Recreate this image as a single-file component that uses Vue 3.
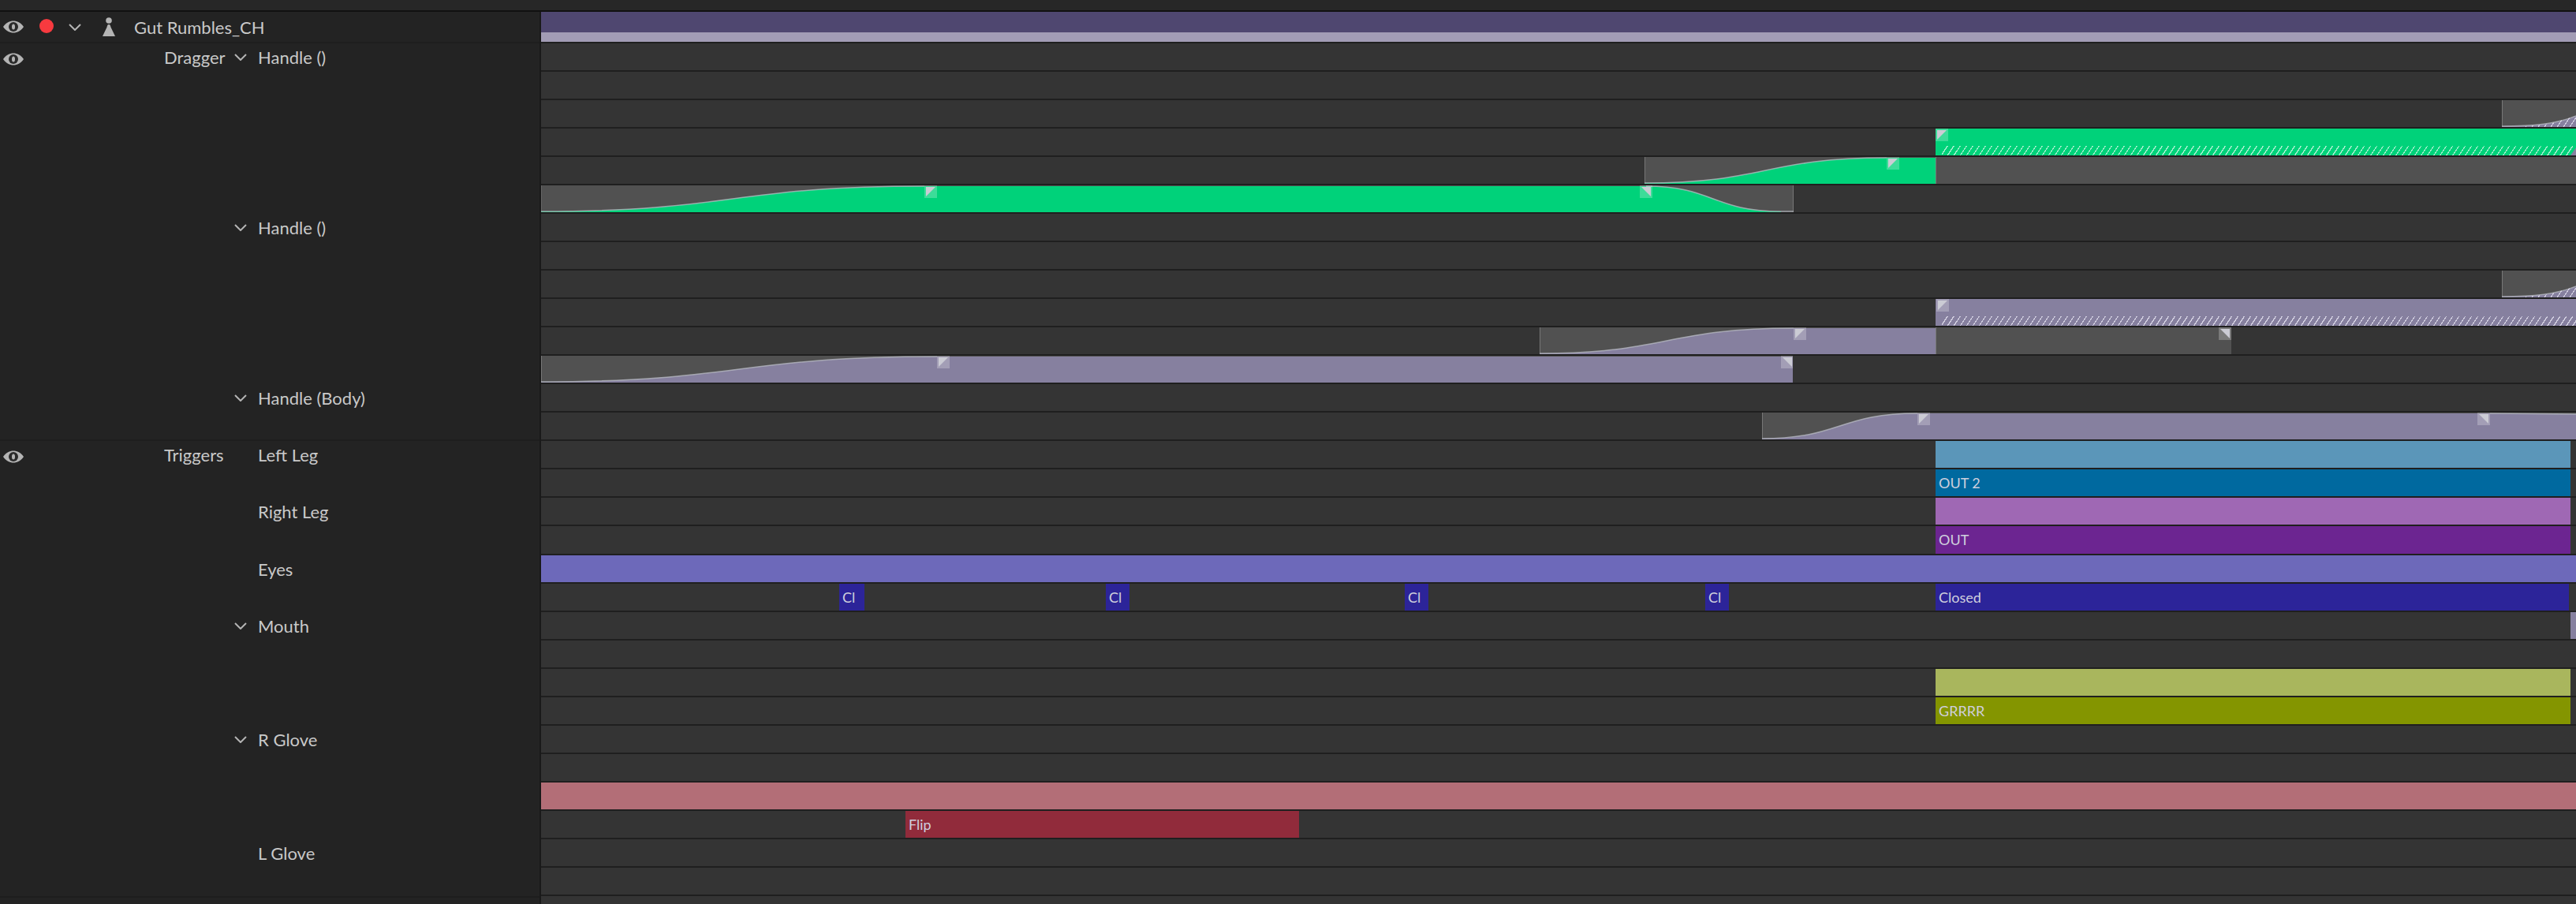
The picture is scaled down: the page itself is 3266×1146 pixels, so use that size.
<template>
  <div class="page">
    <div class="top-strip"></div>
    <div class="main">
      <aside class="side">
        <div class="layer-row">
          <svg class="eye" viewBox="0 0 26 16"><path d="M0 8C4 2.500 8 .5 13 .5S22 2.500 26 8C22 13.500 18 15.500 13 15.500S4 13.500 0 8Z" /><circle class="eye-ring" cx="13" cy="8" r="6" /><ellipse cx="13" cy="8" rx="2" ry="3.500" /></svg>
          <span class="dot"></span>
          <svg class="chev chev-top" viewBox="0 0 16 9"><path d="M1 1l7 7 7-7" /></svg>
          <svg class="person" viewBox="0 0 16 24"><circle cx="8" cy="4" r="3.800" /><path d="M8 9C6 9 6 11 5.500 12.500L0 24H16L10.500 12.500C10 11 10 9 8 9Z" /></svg>
          <span class="layer-name">Gut Rumbles_CH</span>
        </div>
        <div v-for="group in groups" :key="group.name" class="group">
          <div class="group-head">
            <svg class="eye" viewBox="0 0 26 16"><path d="M0 8C4 2.500 8 .5 13 .5S22 2.500 26 8C22 13.500 18 15.500 13 15.500S4 13.500 0 8Z" /><circle class="eye-ring" cx="13" cy="8" r="6" /><ellipse cx="13" cy="8" rx="2" ry="3.500" /></svg>
            <span class="group-name">{{ group.name }}</span>
          </div>
          <div class="group-items">
            <div v-for="item in group.items" :key="item.name" class="item" :style="{ height: item.rows * 36 + (item.extra || 0) + 'px' }">
              <span class="chev-slot">
                <svg v-if="item.open" class="chev" viewBox="0 0 16 9"><path d="M1 1l7 7 7-7" /></svg>
              </span>
              <span>{{ item.name }}</span>
            </div>
          </div>
        </div>
      </aside>

      <div class="tracks">
        <div v-for="(clips, i) in rows" :key="i" class="track" :class="{ first: i === 0, wide: i === 18 }">
          <div
            v-for="clip in clips"
            :key="clip.x"
            class="clip"
            :class="clip.cls"
            :style="{ left: clip.x - 686 + 'px', width: clip.w + 'px' }"
          >
            <svg v-if="clip.fill" class="curve" :viewBox="`0 0 ${clip.w} 34`" preserveAspectRatio="none">
              <path class="curve-fill" :d="clip.fill" />
              <path class="curve-line" :d="clip.line || clip.fill" />
            </svg>
            <div v-if="clip.hatch" class="hatch" :class="clip.hatch"></div>
            <span v-if="clip.label" class="clip-label">{{ clip.label }}</span>
            <i
              v-for="key in clip.keys"
              :key="key.x"
              class="keyframe"
              :class="key.dir"
              :style="{ left: key.x - clip.x + 'px' }"
            ></i>
            <div v-if="clip.tail" class="tail"></div>
          </div>
        </div>
      </div>
    </div>
  </div>
</template>

<script setup>
const groups = [
  {
    name: 'Dragger',
    items: [
      { name: 'Handle ()', rows: 6, open: true },
      { name: 'Handle ()', rows: 6, open: true },
      { name: 'Handle (Body)', rows: 2, open: true },
    ],
  },
  {
    name: 'Triggers',
    items: [
      { name: 'Left Leg', rows: 2 },
      { name: 'Right Leg', rows: 2, extra: 1 },
      { name: 'Eyes', rows: 2 },
      { name: 'Mouth', rows: 4, open: true },
      { name: 'R Glove', rows: 4, open: true },
      { name: 'L Glove', rows: 2 },
    ],
  },
]

const END = 3266
const CUT = 2454

// ease up from the bottom of the clip to the top, ending at local x = b
function rise(b) {
  return `M0 33C${b / 2} 33 ${b / 2} 1 ${b} 1`
}

function riseFill(b, w) {
  return `${rise(b)}L${w} 1L${w} 34L0 34Z`
}

const ramp = {
  x: 3172,
  w: 94,
  cls: 'gray lilac-fill',
  fill: 'M0 33C40 33 70 30 94 20L94 34L0 34Z',
  line: 'M0 33C40 33 70 30 94 20',
  hatch: 'hatch-ramp',
}

const rows = [
  [{ x: 686, w: END - 686, cls: 'summary' }],
  [],
  [],
  [ramp],
  [{ x: CUT, w: END - CUT, cls: 'green', hatch: 'hatch-green', keys: [{ x: 2454, dir: 'in' }], tail: true }],
  [
    { x: 2085, w: 369, cls: 'gray green-fill', fill: riseFill(307, 369), line: rise(307), keys: [{ x: 2392, dir: 'in' }] },
    { x: CUT, w: END - CUT, cls: 'gray' },
  ],
  [
    {
      x: 686,
      w: 1588,
      cls: 'gray green-fill edged',
      fill: `${rise(486)}L1401 1C1486 1 1486 33 1572 33L1572 34L0 34Z`,
      line: `${rise(486)}M1401 1C1486 1 1486 33 1572 33L1588 33`,
      keys: [{ x: 1172, dir: 'in' }, { x: 2079, dir: 'out' }],
    },
  ],
  [],
  [],
  [ramp],
  [{ x: CUT, w: END - CUT, cls: 'lilac', hatch: 'hatch-lilac', keys: [{ x: 2455, dir: 'in' }] }],
  [
    { x: 1952, w: 502, cls: 'gray lilac-fill', fill: riseFill(322, 502), line: rise(322), keys: [{ x: 2274, dir: 'in' }] },
    { x: CUT, w: 375, cls: 'gray', keys: [{ x: 2813, dir: 'out' }] },
  ],
  [
    { x: 686, w: 1587, cls: 'gray lilac-fill', fill: riseFill(502, 1587), line: rise(502), keys: [{ x: 1188, dir: 'in' }, { x: 2258, dir: 'out' }] },
  ],
  [],
  [
    {
      x: 2234,
      w: END - 2234,
      cls: 'gray lilac-fill',
      fill: `${rise(197)}L923 1L1032 2L1032 34L0 34Z`,
      line: `${rise(197)}M923 1L1032 2`,
      keys: [{ x: 2431, dir: 'in' }, { x: 3141, dir: 'out' }],
    },
  ],
  [{ x: CUT, w: 805, cls: 'blue-light' }],
  [{ x: CUT, w: 805, cls: 'blue', label: 'OUT 2' }],
  [{ x: CUT, w: 805, cls: 'purple-light' }],
  [{ x: CUT, w: 805, cls: 'purple', label: 'OUT' }],
  [{ x: 686, w: END - 686, cls: 'indigo-light' }],
  [
    { x: 1064, w: 32, cls: 'indigo', label: 'Cl' },
    { x: 1402, w: 30, cls: 'indigo', label: 'Cl' },
    { x: 1781, w: 30, cls: 'indigo', label: 'Cl' },
    { x: 2162, w: 30, cls: 'indigo', label: 'Cl' },
    { x: CUT, w: 803, cls: 'indigo', label: 'Closed' },
  ],
  [{ x: 3259, w: 7, cls: 'lilac' }],
  [],
  [{ x: CUT, w: 805, cls: 'olive-light' }],
  [{ x: CUT, w: 805, cls: 'olive', label: 'GRRRR' }],
  [],
  [],
  [{ x: 686, w: END - 686, cls: 'rose-light' }],
  [{ x: 1148, w: 499, cls: 'rose', label: 'Flip' }],
  [],
  [],
  [],
]
</script>

<style scoped>
.page {
  width: 3266px;
  height: 1146px;
  overflow: hidden;
  display: flex;
  flex-direction: column;
  background: #232323;
  font-family: Lato, "Open Sans", sans-serif;
  color: #c9c9c9;
  font-size: 22px;
}

.top-strip {
  height: 13px;
  flex: none;
  background: #272727;
  border-bottom: 2px solid #111;
}

.main {
  flex: 1;
  display: flex;
  min-height: 0;
}

.side {
  width: 684px;
  flex: none;
  background: #232323;
  border-right: 2px solid #1a1a1a;
}

.layer-row {
  height: 38px;
  display: flex;
  align-items: center;
  border-bottom: 2px solid #1e1e1e;
  padding-left: 4px;
}

.eye {
  width: 26px;
  height: 16px;
  flex: none;
  fill: #b4b4b4;
}

.eye-ring {
  fill: #2a2a2a;
}

.dot {
  width: 18px;
  height: 18px;
  border-radius: 50%;
  background: #f73a3f;
  margin-left: 20px;
  margin-bottom: 2px;
}

.chev {
  width: 16px;
  height: 9px;
  fill: none;
  stroke: #b4b4b4;
  stroke-width: 2;
}

.chev-top {
  margin-left: 19px;
}

.person {
  width: 16px;
  height: 24px;
  margin-left: 27px;
  fill: #b4b4b4;
}

.layer-name {
  margin-left: 24px;
}

.group {
  display: flex;
  height: 504px;
}

.group + .group {
  height: 577px;
  border-top: 2px solid #1e1e1e;
  border-bottom: 2px solid #1e1e1e;
  margin-top: -2px;
}

.group-head {
  width: 296px;
  flex: none;
  height: 34px;
  display: flex;
  align-items: center;
  padding-left: 4px;
  box-sizing: border-box;
}

.group-head .eye {
  margin-top: 6px;
}

.group-name {
  margin-left: 178px;
  padding-top: 1px;
}

.group-items {
  flex: 1;
}

.item {
  display: flex;
  align-items: flex-start;
  line-height: 36px;
}

.chev-slot {
  width: 31px;
  flex: none;
  height: 34px;
  display: flex;
  align-items: center;
}

.chev-slot .chev {
  margin-left: 1px;
}

.tracks {
  flex: 1;
  min-width: 0;
}

.track {
  position: relative;
  height: 34px;
  background: #343434;
  border-bottom: 2px solid #1f1f1f;
  overflow: hidden;
}

.track.first {
  height: 38px;
}

.track.wide {
  height: 35px;
}

.clip {
  position: absolute;
  top: 0;
  bottom: 0;
  overflow: hidden;
}

.clip-label {
  display: block;
  padding-left: 4px;
  font-size: 18px;
  line-height: 34px;
  color: #cfcfdd;
  white-space: nowrap;
}

.curve {
  position: absolute;
  inset: 0;
  width: 100%;
  height: 100%;
}

.curve-fill {
  fill: currentColor;
  stroke: none;
}

.curve-line {
  fill: none;
  stroke: #b9bcc4;
  stroke-width: 1.500;
  opacity: 0.75;
}

.summary {
  background: linear-gradient(#4f4770 0 26px, #a29cb5 26px);
}

.gray {
  background: #515151;
  box-shadow: inset 1px 0 #777;
}

.edged {
  box-shadow: inset 1px 0 #666, inset -1px 0 #777;
}

.green-fill {
  color: #00d27a;
}

.lilac-fill {
  color: #86809f;
}

.green {
  background: #00d27a;
}

.lilac {
  background: #86809f;
}

.blue-light {
  background: #5b96b9;
}

.blue {
  background: #00699f;
}

.purple-light {
  background: #9f68b4;
}

.purple {
  background: #6c2591;
}

.indigo-light {
  background: #6d69ba;
}

.indigo {
  background: #2c2499;
}

.olive-light {
  background: #a9b65d;
}

.olive {
  background: #849500;
}

.rose-light {
  background: #b36e77;
}

.rose {
  background: #912b3b;
}

.hatch {
  position: absolute;
  left: 8px;
  right: 0;
  bottom: 0;
  height: 12px;
}

.hatch-green {
  background: repeating-linear-gradient(123.700deg, transparent 0 5.400px, #a8f0d2 5.400px 6.660px);
}

.hatch-lilac {
  background: repeating-linear-gradient(123.700deg, transparent 0 5.400px, #d4d1e2 5.400px 6.660px);
}

.hatch-ramp {
  left: 0;
  height: 14px;
  background: repeating-linear-gradient(123.700deg, transparent 0 5.400px, #d4d1e2 5.400px 6.660px);
  clip-path: polygon(30px 13px, 60px 10px, 94px 0, 94px 14px, 30px 14px);
}

.keyframe {
  position: absolute;
  top: 0;
  width: 16px;
  height: 16px;
  background: rgba(255, 255, 255, 0.24);
}

.keyframe::after {
  content: "";
  position: absolute;
  left: 2px;
  top: 2px;
  width: 12px;
  height: 12px;
  background: #cbcbd4;
}

.keyframe.in::after {
  clip-path: polygon(0 0, 100% 0, 0 100%);
}

.keyframe.out::after {
  clip-path: polygon(0 0, 100% 0, 100% 100%);
}

.tail {
  position: absolute;
  right: 0;
  bottom: 0;
  width: 7px;
  height: 10px;
  background: #86809f;
  clip-path: polygon(100% 0, 100% 100%, 0 100%);
}
</style>

<style>
body {
  background: #232323;
}
</style>
